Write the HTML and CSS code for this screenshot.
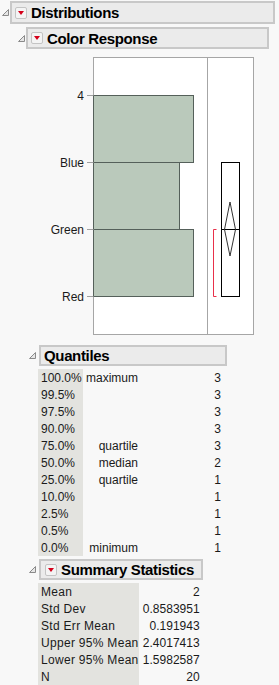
FILE: index.html
```html
<!DOCTYPE html>
<html lang="en">
<head>
  <meta charset="UTF-8" />
  <title>Distributions</title>
  <link rel="stylesheet" href="styles.css">
</head>
<body>
  <div class="outline lvl0">
    <div class="outline-head">
      <svg class="disclose" width="7" height="7"><polygon points="6.5,0.5 6.5,6.5 0.5,6.5" /></svg>
      <div class="title-box"><span class="hotspot"></span>Distributions</div>
    </div>
    <div class="outline-body">
      <div class="outline lvl1">
        <div class="outline-head">
          <svg class="disclose" width="7" height="7"><polygon points="6.5,0.5 6.5,6.5 0.5,6.5" /></svg>
          <div class="title-box"><span class="hotspot"></span>Color Response</div>
        </div>
        <div class="outline-body">
          <svg class="chart" width="230" height="290">
            <rect class="frame" x="64.5" y="5.5" width="160" height="277" />
            <line class="frame-line" x1="178.5" y1="5.5" x2="178.5" y2="282.5" />
            <rect class="bar" x="64.5" y="43.5" width="100" height="67" />
            <rect class="bar" x="64.5" y="110.5" width="86" height="67" />
            <rect class="bar" x="64.5" y="177.5" width="100" height="67" />
            <g class="ticks">
              <line x1="58" y1="43.5" x2="64.5" y2="43.5" />
              <line x1="58" y1="110.5" x2="64.5" y2="110.5" />
              <line x1="58" y1="177.5" x2="64.5" y2="177.5" />
              <line x1="58" y1="244.5" x2="64.5" y2="244.5" />
            </g>
            <g class="axis-labels">
              <text x="55" y="47.5">4</text>
              <text x="55" y="114.5">Blue</text>
              <text x="55" y="181.5">Green</text>
              <text x="55" y="248.5">Red</text>
            </g>
            <rect class="box" x="192.5" y="110.5" width="18" height="134" />
            <line class="box" x1="192.5" y1="177.5" x2="210.5" y2="177.5" />
            <polygon class="diamond" points="201,150 206.5,177.5 201,204 195.5,177.5" />
            <path class="bracket" d="M187.5 177.5 H184.5 V244.5 H187.5" />
          </svg>

          <div class="outline lvl2">
            <div class="outline-head">
              <svg class="disclose" width="7" height="7"><polygon points="6.5,0.5 6.5,6.5 0.5,6.5" /></svg>
              <div class="title-box quantiles-box">Quantiles</div>
            </div>
            <table class="stats quantiles">
              <tr><td class="lbl">100.0%</td><td class="desc">maximum</td><td class="val">3</td></tr>
              <tr><td class="lbl">99.5%</td><td class="desc"></td><td class="val">3</td></tr>
              <tr><td class="lbl">97.5%</td><td class="desc"></td><td class="val">3</td></tr>
              <tr><td class="lbl">90.0%</td><td class="desc"></td><td class="val">3</td></tr>
              <tr><td class="lbl">75.0%</td><td class="desc">quartile</td><td class="val">3</td></tr>
              <tr><td class="lbl">50.0%</td><td class="desc">median</td><td class="val">2</td></tr>
              <tr><td class="lbl">25.0%</td><td class="desc">quartile</td><td class="val">1</td></tr>
              <tr><td class="lbl">10.0%</td><td class="desc"></td><td class="val">1</td></tr>
              <tr><td class="lbl">2.5%</td><td class="desc"></td><td class="val">1</td></tr>
              <tr><td class="lbl">0.5%</td><td class="desc"></td><td class="val">1</td></tr>
              <tr><td class="lbl">0.0%</td><td class="desc">minimum</td><td class="val">1</td></tr>
            </table>
          </div>

          <div class="outline lvl2">
            <div class="outline-head">
              <svg class="disclose" width="7" height="7"><polygon points="6.5,0.5 6.5,6.5 0.5,6.5" /></svg>
              <div class="title-box summary-box"><span class="hotspot"></span>Summary Statistics</div>
            </div>
            <table class="stats summary">
              <tr><td class="lbl">Mean</td><td class="val">2</td></tr>
              <tr><td class="lbl">Std Dev</td><td class="val">0.8583951</td></tr>
              <tr><td class="lbl">Std Err Mean</td><td class="val">0.191943</td></tr>
              <tr><td class="lbl">Upper 95% Mean</td><td class="val">2.4017413</td></tr>
              <tr><td class="lbl">Lower 95% Mean</td><td class="val">1.5982587</td></tr>
              <tr><td class="lbl">N</td><td class="val">20</td></tr>
            </table>
          </div>
        </div>
      </div>
    </div>
  </div>
</body>
</html>
```

FILE: styles.css
```css
body {
  margin: 0;
  background: #f8f8f8;
  font-family: "Liberation Sans", Arial, sans-serif;
  font-size: 12px;
  color: #1a1a1a;
  overflow: hidden;
}
.outline-head {
  display: flex;
  align-items: center;
}
.disclose {
  flex: none;
  margin-right: 1px;
}
.disclose polygon {
  fill: #e6e6e6;
  stroke: #8a8a8a;
  stroke-width: 1;
}
.title-box {
  display: flex;
  align-items: center;
  box-sizing: border-box;
  height: 22px;
  background: #ebebeb;
  border: 2px solid #c8c8c8;
  font-weight: bold;
  font-size: 15px;
  letter-spacing: -0.35px;
  color: #000;
  padding-left: 3px;
  white-space: nowrap;
}
.hotspot {
  position: relative;
  flex: none;
  box-sizing: border-box;
  width: 12px;
  height: 12px;
  margin-right: 4px;
  border: 1px solid #c4c4c4;
  border-radius: 2px;
  background: #f4f4f4;
}
.hotspot::after {
  content: "";
  position: absolute;
  left: 2px;
  top: 3px;
  border-left: 3px solid transparent;
  border-right: 3px solid transparent;
  border-top: 4px solid #d4001a;
}

/* level 0 */
.lvl0 > .outline-head {
  padding: 1px 4px 0 2px;
}
.lvl0 > .outline-head .title-box {
  flex: 1;
  height: 23px;
}
.lvl0 > .outline-body {
  padding-top: 3px;
}

/* level 1 */
.lvl1 > .outline-head {
  padding: 0 10px 0 18px;
}
.lvl1 > .outline-head .title-box {
  flex: 1;
}
.lvl1 > .outline-body {
  padding-left: 29px;
}
.chart {
  display: block;
  margin-top: 3px;
}
.chart .frame {
  fill: #fff;
  stroke: #a6a6a6;
}
.chart .frame-line {
  stroke: #a6a6a6;
}
.chart .bar {
  fill: #bac9bb;
  stroke: #55605a;
}
.chart .ticks line {
  stroke: #a0a0a0;
}
.chart .axis-labels text {
  text-anchor: end;
  font-size: 12px;
  fill: #1a1a1a;
  font-family: "Liberation Sans", Arial, sans-serif;
}
.chart .box {
  fill: none;
  stroke: #000;
}
.chart .diamond {
  fill: none;
  stroke: #333;
}
.chart .bracket {
  fill: none;
  stroke: #e8304a;
}

/* level 2 */
.lvl2 > .outline-head {
  padding-top: 3px;
}
.lvl2 > .outline-head .disclose {
  margin-right: 3px;
}
.quantiles-box {
  width: 188px;
  height: 21px;
}
.summary-box {
  width: 164px;
  height: 21px;
  padding-left: 4px;
}
.stats {
  border-collapse: collapse;
  margin: 3px 0 0 9px;
}
.stats td {
  height: 17px;
  padding: 0;
  white-space: nowrap;
  vertical-align: middle;
}
.stats .lbl {
  background: #e3e3df;
  padding-left: 3px;
}
.quantiles .lbl {
  width: 42px;
}
.quantiles .desc {
  width: 55px;
  text-align: right;
}
.quantiles .val {
  width: 83px;
  text-align: right;
}
.summary .lbl {
  width: 96px;
  letter-spacing: 0.3px;
}
.summary .val {
  width: 61px;
  text-align: right;
}
```
